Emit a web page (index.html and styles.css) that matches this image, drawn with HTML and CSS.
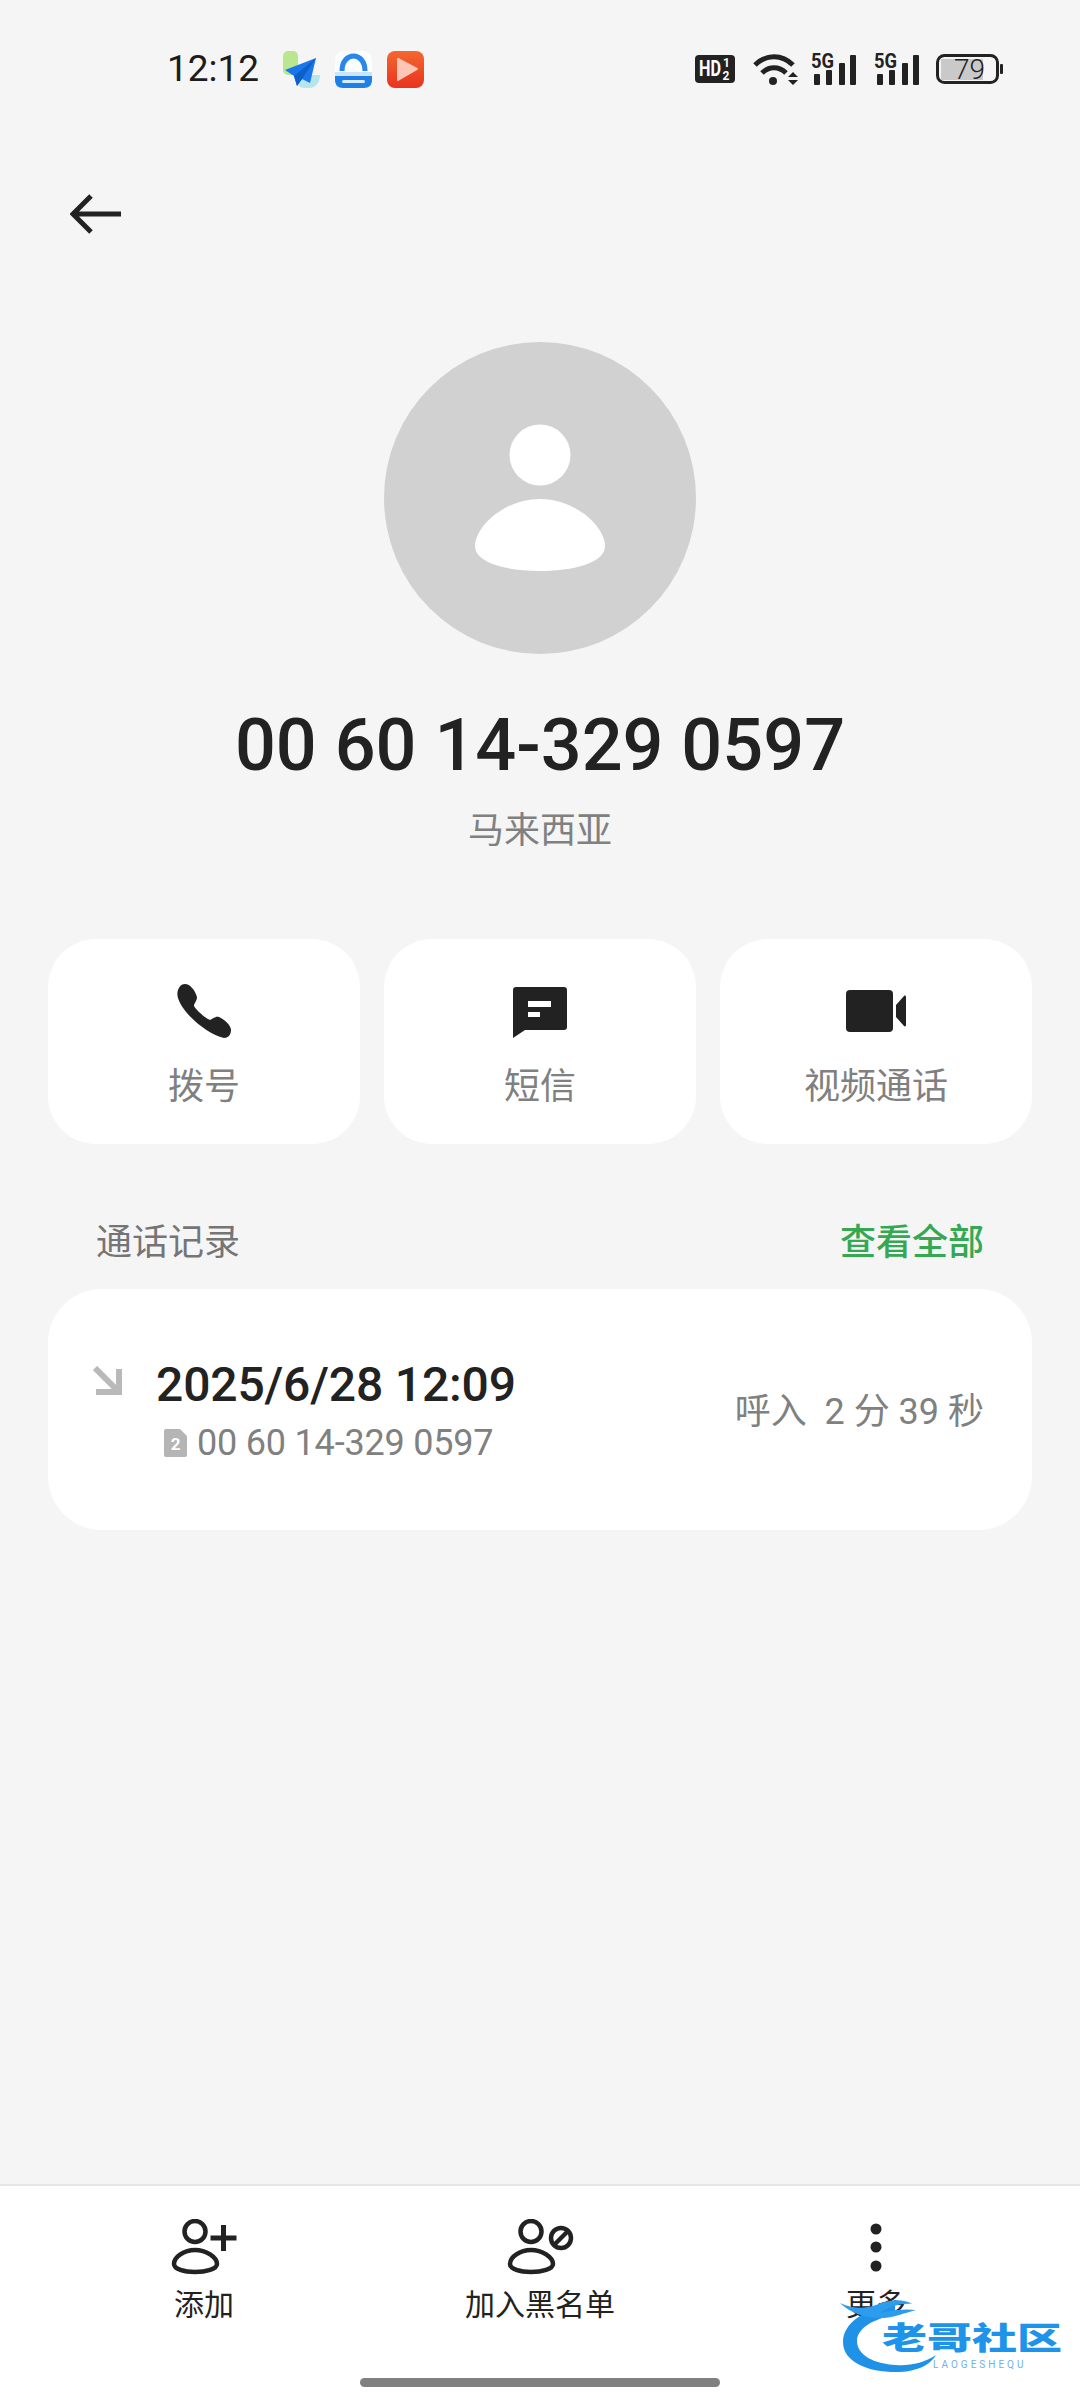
FILE: index.html
```html
<!DOCTYPE html>
<html lang="zh">
<head>
<meta charset="utf-8">
<title>通话详情</title>
<link rel="stylesheet" href="styles.css">
</head>
<body>
<div class="page">
  <header class="status">
    <span class="time">12:12</span>
    <div class="apps">
      <svg class="app" viewBox="0 0 37 37"><rect x="0" y="0" width="15" height="24" rx="5" fill="#b9e68f"/><path d="M15 24h22c0 7-4 13-11 13h-5c-4 0-6-3-6-6z" fill="#b5e6ee"/><path d="M33 7 2 19l9 6 3 10 5-7 8 4z" fill="#1877ea"/><path d="M33 7 11 25l3 10 5-7z" fill="#0f5fcb"/></svg>
      <svg class="app" viewBox="0 0 37 37"><rect width="37" height="37" rx="9" fill="#fbfdff"/><path d="M7 20C7 0 30 0 30 20" fill="none" stroke="#2a86e8" stroke-width="5"/><path d="M0 25h37v4c0 5-3 8-8 8H8c-5 0-8-3-8-8z" fill="#1f7fe6"/><rect x="0" y="21" width="37" height="4" fill="#cbe6fb"/><rect x="7" y="29" width="23" height="3" rx="1.500" fill="#d8ecff"/></svg>
      <svg class="app" viewBox="0 0 37 37"><defs><linearGradient id="redg" x1="0" y1="0" x2="0" y2="1"><stop offset="0" stop-color="#f4672f"/><stop offset="1" stop-color="#e9331f"/></linearGradient></defs><rect width="37" height="37" rx="8" fill="url(#redg)"/><path d="M11 8 30 18 11 29z" fill="#ffc6b5" stroke="#ffc6b5" stroke-width="2" stroke-linejoin="round"/></svg>
    </div>
    <div class="indicators">
      <svg class="hd" viewBox="0 0 40 28"><rect width="40" height="28" rx="4" fill="#222"/><text x="4" y="21" class="hd-main" textLength="22" lengthAdjust="spacingAndGlyphs">HD</text><text x="28" y="12" class="hd-sub">1</text><text x="27.500" y="25" class="hd-sub">2</text></svg>
      <svg class="wifi" viewBox="0 0 45 34"><path d="M2 13C13 2 29 2 40 13" class="wifi-arc"/><path d="M9 21C16 14 26 14 33 21" class="wifi-arc"/><circle cx="20" cy="29" r="4" fill="#222"/><path d="M40 20l5 5H35zM35 28h10l-5 5z" fill="#222"/></svg>
      <svg class="signal" viewBox="0 0 46 32"><text x="0" y="15" class="five-g" textLength="23" lengthAdjust="spacingAndGlyphs">5G</text><rect x="3" y="21" width="6" height="11" rx="1" fill="#222"/><rect x="15" y="17" width="6" height="15" rx="1" fill="#222"/><rect x="28" y="10" width="6" height="22" rx="1" fill="#222"/><rect x="39" y="2" width="6" height="30" rx="1" fill="#222"/></svg>
      <svg class="signal signal-two" viewBox="0 0 46 32"><text x="0" y="15" class="five-g" textLength="23" lengthAdjust="spacingAndGlyphs">5G</text><rect x="3" y="21" width="6" height="11" rx="1" fill="#222"/><rect x="15" y="17" width="6" height="15" rx="1" fill="#222"/><rect x="28" y="10" width="6" height="22" rx="1" fill="#222"/><rect x="39" y="2" width="6" height="30" rx="1" fill="#222"/></svg>
      <svg class="battery" viewBox="0 0 67 30"><rect x="1.500" y="1.500" width="60" height="27" rx="7" fill="none" stroke="#222" stroke-width="3"/><path d="M5 5h42v21H5z" fill="#c9c9c9"/><rect x="64" y="10" width="3" height="10" rx="1" fill="#222"/><text x="18" y="25" class="batt-num">79</text></svg>
    </div>
  </header>

  <div class="topbar">
    <svg class="back" viewBox="0 0 52 40"><path d="M51 20H4M21 2 3 20l18 18" fill="none" stroke="#222" stroke-width="5"/></svg>
  </div>

  <section class="profile">
    <svg class="avatar" viewBox="0 0 312 312"><circle cx="156" cy="156" r="156" fill="#d1d1d1"/><circle cx="156" cy="113" r="30.500" fill="#fff"/><path d="M156 157C192 157 221 185 221 204C221 220 192 229 156 229C120 229 91 220 91 204C91 185 120 157 156 157Z" fill="#fff"/></svg>
    <h1 class="number">00 60 14-329 0597</h1>
    <p class="region">马来西亚</p>
  </section>

  <section class="actions">
    <div class="action">
      <svg class="action-icon" viewBox="0 0 54 54"><path d="M8 0C13 0 18 6 20 13C20 17 17 19 17 22C19 26 28 34 33 36C36 35 38 32 42 33C47 35 54 41 54 46C54 51 51 54 47 54C30 50 6 30 1 14C-1 8 2 0 8 0Z" fill="#222"/></svg>
      <span>拨号</span>
    </div>
    <div class="action">
      <svg class="action-icon" viewBox="0 0 54 54"><path d="M3 3h48a3 3 0 0 1 3 3v37a3 3 0 0 1-3 3H12L0 54V6a3 3 0 0 1 3-3Z" fill="#222"/><rect x="15" y="17" width="23" height="6" fill="#fff"/><rect x="15" y="28" width="12" height="5" fill="#fff"/></svg>
      <span>短信</span>
    </div>
    <div class="action">
      <svg class="action-icon action-icon-wide" viewBox="0 0 60 54"><rect x="0" y="6" width="47" height="42" rx="4" fill="#222"/><path d="M50 21 58 12c1-1 2 0 2 1v28c0 1-1 2-2 1l-8-9z" fill="#222"/></svg>
      <span>视频通话</span>
    </div>
  </section>

  <div class="section-head">
    <span>通话记录</span>
    <span class="see-all">查看全部</span>
  </div>

  <section class="record">
    <svg class="call-dir" viewBox="0 0 29 29"><path d="M2 2 24 24M26 3V26H3" fill="none" stroke="#b9b9b9" stroke-width="6"/></svg>
    <div class="record-main">
      <div class="record-date">2025/6/28 12:09</div>
      <div class="record-num">
        <svg class="sim" viewBox="0 0 23 28"><path d="M2 0H16L23 7V26a2 2 0 0 1-2 2H2a2 2 0 0 1-2-2V2A2 2 0 0 1 2 0Z" fill="#b5b5b5"/><text x="11.500" y="21" class="sim-num">2</text></svg>
        <span>00 60 14-329 0597</span>
      </div>
    </div>
    <div class="record-info">呼入&nbsp;&nbsp;2 分 39 秒</div>
  </section>

  <div class="spacer"></div>

  <nav class="nav">
    <div class="nav-row">
      <div class="nav-item">
        <svg class="nav-icon" viewBox="0 0 72 56"><circle cx="27" cy="12.500" r="10.500" class="line"/><path d="M27 31C38 31 49 38 49 45C49 50 38 53 27 53C16 53 6 50 6 45C6 38 16 31 27 31Z" class="line"/><path d="M42.500 19H68.500M55.500 6V32" class="line line-heavy"/></svg>
        <span>添加</span>
      </div>
      <div class="nav-item">
        <svg class="nav-icon" viewBox="0 0 72 56"><circle cx="27" cy="12.500" r="10.500" class="line"/><path d="M27 31C38 31 49 38 49 45C49 50 38 53 27 53C16 53 6 50 6 45C6 38 16 31 27 31Z" class="line"/><circle cx="57" cy="19" r="10" class="line"/><path d="M50 26 64 12" class="line"/></svg>
        <span>加入黑名单</span>
      </div>
      <div class="nav-item">
        <svg class="nav-icon" viewBox="0 0 72 56"><circle cx="36" cy="10" r="5.500" fill="#222"/><circle cx="36" cy="28" r="5.500" fill="#222"/><circle cx="36" cy="47" r="5.500" fill="#222"/></svg>
        <span>更多</span>
      </div>
    </div>
    <div class="home-bar"></div>
  </nav>

  <div class="watermark">
    <svg class="wm-swoosh" viewBox="0 0 240 85"><path d="M55 10C25 13 3 28 3 47C3 68 30 78 60 77C78 76 90 70 96 60C84 68 70 71 56 70C34 69 17 60 17 46C17 34 32 24 55 20Z" fill="#1f92e8"/><path d="M0 8C14 14 24 14 36 10C50 4 64 4 72 9C58 8 48 13 40 18C56 14 68 14 76 15C64 18 56 22 44 23C26 24 10 18 0 8Z" fill="#2c9cee"/></svg>
    <span class="wm-title">老哥社区</span>
    <span class="wm-sub">LAOGESHEQU</span>
  </div>
</div>
</body>
</html>
```
FILE: styles.css
```css
* { box-sizing: border-box; }
html, body { margin: 0; padding: 0; }
body {
  background: #f5f5f5;
  font-family: Roboto, "Noto Sans CJK SC", sans-serif;
  color: #222;
}
.page {
  position: relative;
  width: 1080px;
  height: 2400px;
  display: flex;
  flex-direction: column;
  overflow: hidden;
}

/* status bar */
.status {
  height: 138px;
  display: flex;
  align-items: center;
  padding-left: 167px;
}
.time { font-size: 37px; line-height: 44px; width: 116px; color: #1c1c1c; }
.apps { display: flex; gap: 15px; }
.app { width: 37px; height: 37px; display: block; }
.indicators { margin-left: 271px; display: flex; align-items: center; }
.hd { width: 40px; height: 28px; display: block; overflow: visible; }
.hd-main { font: 700 22px Roboto, sans-serif; fill: #fff; }
.hd-sub { font: 700 12px Roboto, sans-serif; fill: #fff; }
.wifi { width: 45px; height: 34px; display: block; margin-left: 18px; }
.wifi-arc { fill: none; stroke: #222; stroke-width: 5; }
.signal { width: 46px; height: 32px; display: block; margin-left: 13px; overflow: visible; }
.signal-two { margin-left: 17px; }
.five-g { font: 700 20px Roboto, sans-serif; fill: #222; }
.battery { width: 67px; height: 30px; display: block; margin-left: 16px; overflow: visible; }
.batt-num { font: 300 28px Roboto, sans-serif; fill: #222; }

/* back */
.topbar { height: 204px; padding: 56px 0 0 70px; }
.back { width: 52px; height: 40px; display: block; }

/* profile */
.profile { display: flex; flex-direction: column; align-items: center; }
.avatar { width: 312px; height: 312px; display: block; }
.number {
  margin: 50px 0 0;
  font-size: 72px;
  line-height: 84px;
  font-weight: 500;
  color: #222;
}
.region {
  margin: 17px 0 0;
  font-size: 36px;
  line-height: 52px;
  color: #808080;
}

/* action cards */
.actions {
  display: flex;
  gap: 24px;
  padding: 0 48px;
  margin-top: 82px;
}
.action {
  width: 312px;
  height: 205px;
  background: #fff;
  border-radius: 48px;
  display: flex;
  flex-direction: column;
  align-items: center;
  padding-top: 45px;
  font-size: 36px;
  line-height: 52px;
  color: #808080;
}
.action-icon { width: 54px; height: 54px; display: block; margin-bottom: 23px; }
.action-icon-wide { width: 60px; }

/* call log */
.section-head {
  margin-top: 74px;
  padding: 0 96px;
  display: flex;
  justify-content: space-between;
  font-size: 36px;
  line-height: 50px;
  color: #757575;
}
.see-all { color: #34a853; font-weight: 500; }
.record {
  margin: 21px 48px 0;
  height: 241px;
  background: #fff;
  border-radius: 54px;
  display: flex;
  align-items: center;
  padding: 0 48px 0 45px;
}
.call-dir { width: 29px; height: 29px; display: block; align-self: flex-start; margin-top: 77px; }
.record-main { margin-left: 34px; flex: 1; }
.record-date { font-size: 48px; line-height: 60px; font-weight: 500; letter-spacing: -0.15px; color: #222; }
.record-num {
  margin-top: 6px;
  display: flex;
  align-items: center;
  gap: 10px;
  padding-left: 8px;
  font-size: 36px;
  line-height: 44px;
  letter-spacing: -0.2px;
  color: #808080;
}
.sim { width: 23px; height: 28px; display: block; overflow: visible; }
.sim-num { font: 700 17px Roboto, sans-serif; fill: #fff; text-anchor: middle; }
.record-info { font-size: 36px; line-height: 50px; margin-top: 4px; color: #808080; }

.spacer { flex: 1; }

/* bottom nav */
.nav {
  height: 216px;
  background: #fff;
  border-top: 2px solid #e6e6e6;
  display: flex;
  flex-direction: column;
  align-items: center;
}
.nav-row {
  width: 100%;
  padding: 33px 36px 0;
  display: flex;
}
.nav-item {
  flex: 1;
  display: flex;
  flex-direction: column;
  align-items: center;
  font-size: 30px;
  line-height: 42px;
  color: #222;
}
.nav-icon { width: 72px; height: 56px; display: block; margin-bottom: 9px; }
.line { fill: none; stroke: #222; stroke-width: 4.5; }
.line-heavy { stroke-width: 5; }
.home-bar {
  margin-top: 52px;
  width: 360px;
  height: 9px;
  border-radius: 5px;
  background: #808080;
}

/* watermark laid over the bottom bar */
.watermark {
  position: absolute;
  left: 840px;
  top: 2295px;
  width: 240px;
  height: 85px;
}
.wm-swoosh { position: absolute; left: 0; top: 0; width: 240px; height: 85px; }
.wm-title {
  position: absolute;
  left: 42px;
  top: 18px;
  font-family: "Noto Sans CJK SC", sans-serif;
  font-weight: 900;
  font-size: 45px;
  line-height: 45px;
  white-space: nowrap;
  color: #1e93ea;
  transform: scaleY(0.68);
  transform-origin: center;
}
.wm-sub {
  position: absolute;
  left: 93px;
  top: 64px;
  font-family: Roboto, sans-serif;
  font-size: 10px;
  line-height: 11px;
  letter-spacing: 3px;
  white-space: nowrap;
  color: #6fb0e8;
}
```
